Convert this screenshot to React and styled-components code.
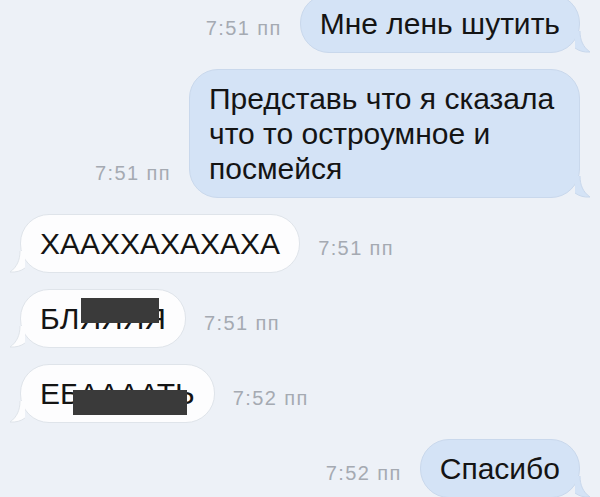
import React from "react";
import styled, { createGlobalStyle } from "styled-components";

const GlobalStyle = createGlobalStyle`
  html, body {
    margin: 0;
    padding: 0;
    background: #edf1f7;
  }
  body {
    font-family: "Liberation Sans", Arial, sans-serif;
  }
`;

const Page = styled.div`
  width: 600px;
  height: 497px;
  overflow: hidden;
  background: #edf1f7;
`;

const Feed = styled.div`
  display: flex;
  flex-direction: column;
  gap: 16px;
  margin-top: -6px;
  padding: 0 20px;
`;

const Row = styled.div`
  display: flex;
  align-items: flex-end;
  justify-content: ${(props) => (props.out ? "flex-end" : "flex-start")};
  gap: 18px;
`;

const Time = styled.span`
  font-size: 20px;
  line-height: 20px;
  letter-spacing: 1.4px;
  color: #a5aab2;
  padding-bottom: 15px;
  white-space: nowrap;
`;

const Bubble = styled.div`
  position: relative;
  box-sizing: border-box;
  max-width: 391px;
  padding: 11px 19px;
  border-radius: 29px;
  font-size: 30px;
  line-height: 35px;
  color: #141414;
  background: ${(props) => (props.out ? "#d4e3f6" : "#fdfdfe")};
  border: 1px solid ${(props) => (props.out ? "#c9d8ec" : "#dfe4ea")};
`;

const TailSvg = styled.svg`
  position: absolute;
  bottom: -1px;
  width: 16px;
  height: 22px;
  ${(props) =>
    props.out
      ? "right: -12px;"
      : "left: -12px; transform: scaleX(-1);"}
`;

const Redacted = styled.span`
  position: absolute;
  background: #3a3a3a;
  left: ${(props) => props.left}px;
  top: ${(props) => props.top}px;
  width: ${(props) => props.w}px;
  height: 25px;
`;

const Tail = ({ out }) => (
  <TailSvg out={out} viewBox="0 0 16 22">
    <path
      d="M0 0 L5 0 C5 9 8 16 15 21 C9 21.5 4 20 0 17 Z"
      fill={out ? "#d4e3f6" : "#fdfdfe"}
    />
    <path
      d="M5 0 C5 9 8 16 15 21 C9 21.5 4 20 0 17"
      fill="none"
      stroke={out ? "#c9d8ec" : "#dfe4ea"}
      strokeWidth="1"
    />
  </TailSvg>
);

const messages = [
  { out: true, time: "7:51 пп", text: "Мне лень шутить" },
  {
    out: true,
    time: "7:51 пп",
    text: "Представь что я сказала что то остроумное и посмейся",
  },
  { out: false, time: "7:51 пп", text: "ХААХХАХАХАХА" },
  {
    out: false,
    time: "7:51 пп",
    text: "БЛЯЯЯЯ",
    redact: { left: 60, top: 8, w: 78 },
  },
  {
    out: false,
    time: "7:52 пп",
    text: "ЕБААААТЬ",
    redact: { left: 52, top: 25, w: 114 },
  },
  { out: true, time: "7:52 пп", text: "Спасибо" },
];

const App = () => (
  <Page>
    <GlobalStyle />
    <Feed>
      {messages.map((m, i) => {
        const bubble = (
          <Bubble out={m.out}>
            {m.text}
            {m.redact && (
              <Redacted left={m.redact.left} top={m.redact.top} w={m.redact.w} />
            )}
            <Tail out={m.out} />
          </Bubble>
        );
        return (
          <Row key={i} out={m.out}>
            {m.out ? (
              <>
                <Time>{m.time}</Time>
                {bubble}
              </>
            ) : (
              <>
                {bubble}
                <Time>{m.time}</Time>
              </>
            )}
          </Row>
        );
      })}
    </Feed>
  </Page>
);

export default App;
